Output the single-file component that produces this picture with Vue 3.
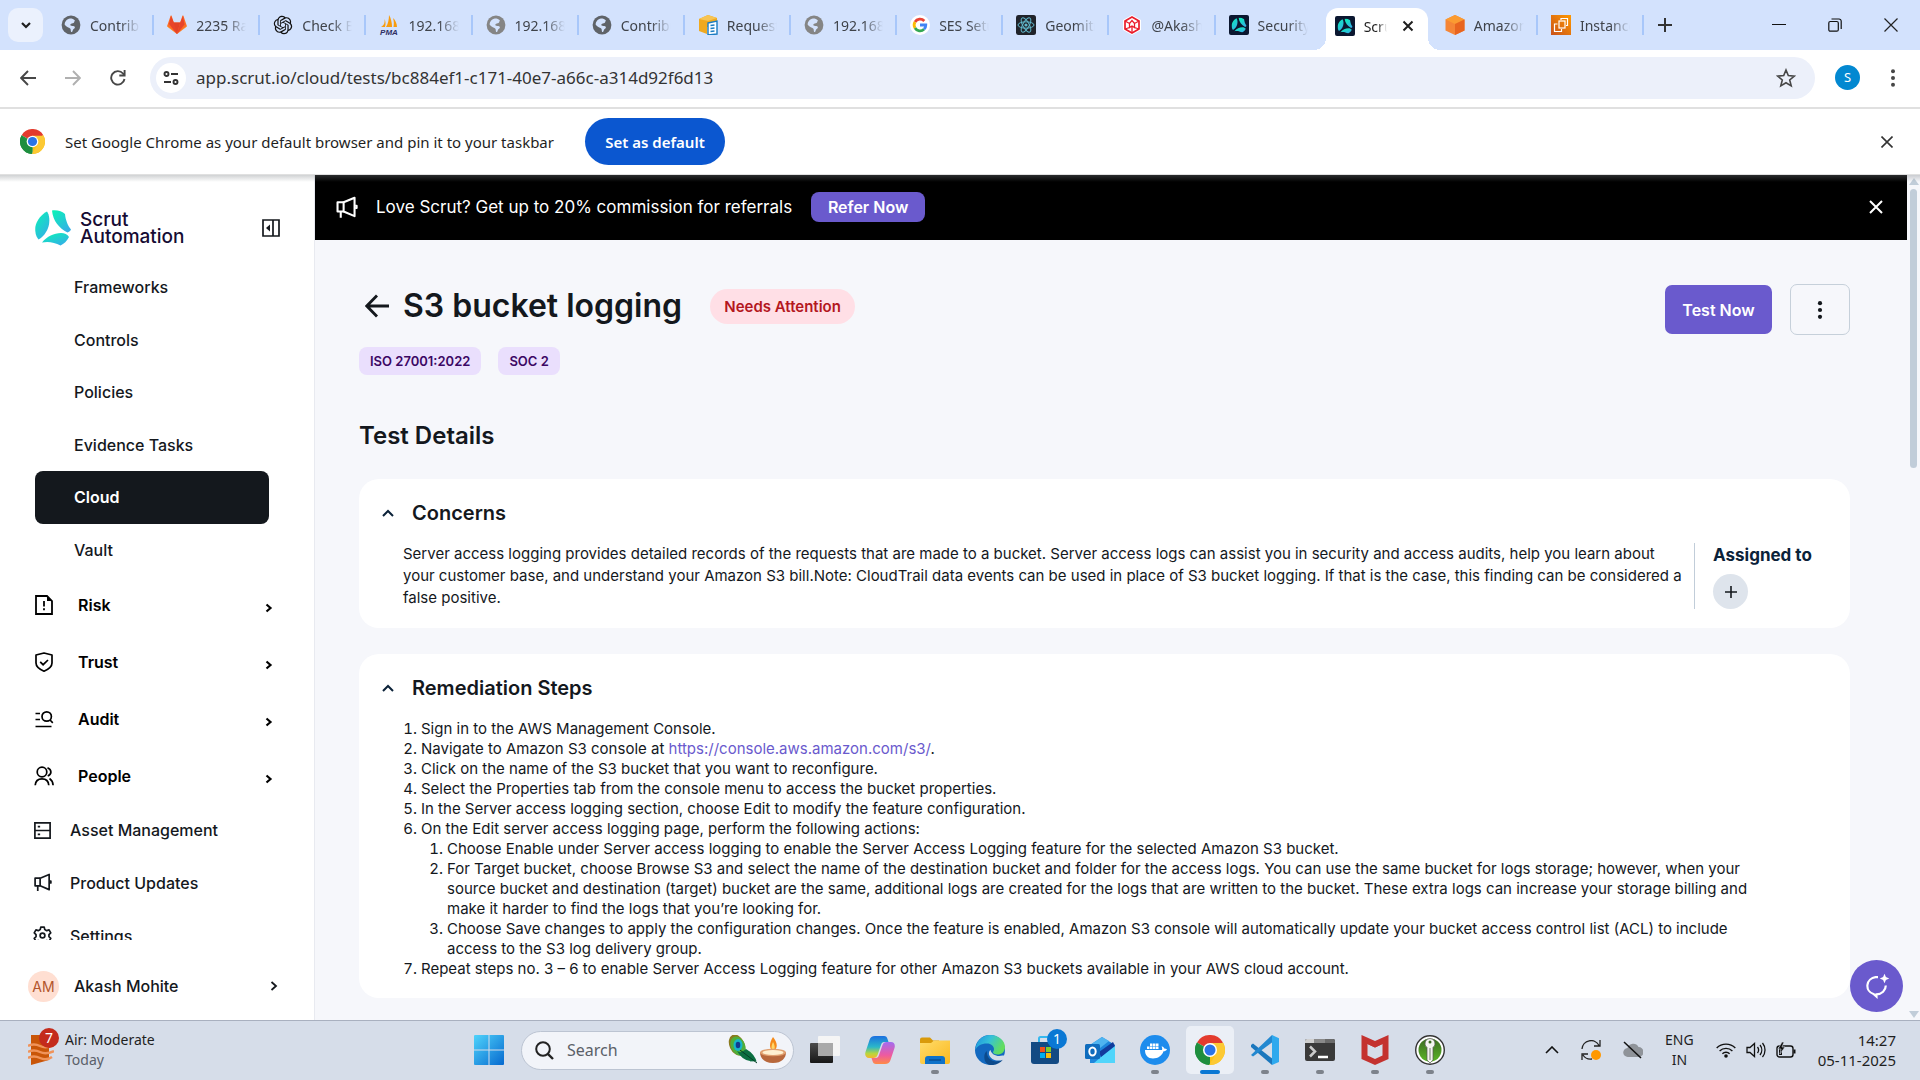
<script setup>
import { ref } from 'vue'

const tabs = [
  { icon: 'globe-dark', title: 'Contributions' },
  { icon: 'gitlab', title: '2235 Raise' },
  { icon: 'openai', title: 'Check Bucket' },
  { icon: 'pma', title: '192.168.1.20' },
  { icon: 'globe', title: '192.168.1.20' },
  { icon: 'globe-dark', title: 'Contributions' },
  { icon: 'request', title: 'Requests' },
  { icon: 'globe', title: '192.168.1.20' },
  { icon: 'google', title: 'SES Setup' },
  { icon: 'react', title: 'Geomitra' },
  { icon: 'redhex', title: '@Akash M' },
  { icon: 'scrut-tab', title: 'Security' },
  { icon: 'scrut-tab', title: 'Scrut', active: true },
  { icon: 'aws-cube', title: 'Amazon S3' },
  { icon: 'ec2', title: 'Instances' },
]

const subItems = ['Frameworks', 'Controls', 'Policies', 'Evidence Tasks', 'Cloud', 'Vault']
const groups = [
  { icon: 'risk', label: 'Risk' },
  { icon: 'trust', label: 'Trust' },
  { icon: 'audit', label: 'Audit' },
  { icon: 'people', label: 'People' },
]
const extras = [
  { icon: 'asset', label: 'Asset Management' },
  { icon: 'mega', label: 'Product Updates' },
  { icon: 'gear', label: 'Settings' },
]
const apps = [
  { icon: 'taskview', label: 'Task view' },
  { icon: 'copilot', label: 'Copilot' },
  { icon: 'explorer', label: 'File Explorer', running: true },
  { icon: 'edge', label: 'Edge' },
  { icon: 'store', label: 'Store', badge: '1' },
  { icon: 'outlook', label: 'Outlook' },
  { icon: 'docker', label: 'Docker', running: true },
  { icon: 'chrome', label: 'Chrome', running: true, active: true },
  { icon: 'vscode', label: 'Visual Studio Code', running: true },
  { icon: 'terminal', label: 'Terminal', running: true },
  { icon: 'mcafee', label: 'McAfee', running: true },
  { icon: 'keepass', label: 'KeePass', running: true },
]
const url = ref('app.scrut.io/cloud/tests/bc884ef1-c171-40e7-a66c-a314d92f6d13')
const query = ref('')
</script>

<template>
  <div class="screen">
    <svg class="sprite" aria-hidden="true">
      <defs>
        <linearGradient id="gScrut" x1="0" y1="0" x2="0.7" y2="1"><stop offset="0" stop-color="#08f5b5" /><stop offset="1" stop-color="#33b0e6" /></linearGradient>
        <linearGradient id="gWin" x1="0" y1="0" x2="1" y2="1"><stop offset="0" stop-color="#4fd3fb" /><stop offset="1" stop-color="#0669cf" /></linearGradient>
        <linearGradient id="gEdge" x1="0" y1="0" x2="1" y2="0.4"><stop offset="0" stop-color="#1b8fe0" /><stop offset="0.5" stop-color="#35c1d8" /><stop offset="1" stop-color="#63dd5e" /></linearGradient>
        <linearGradient id="gFolder" x1="0" y1="0" x2="1" y2="1"><stop offset="0" stop-color="#ffdc6b" /><stop offset="1" stop-color="#fbb91f" /></linearGradient>
        <linearGradient id="gCopA" x1="0" y1="0" x2="0" y2="1"><stop offset="0" stop-color="#1b6fe0" /><stop offset="0.5" stop-color="#2bb8c9" /><stop offset="0.8" stop-color="#b9d63c" /><stop offset="1" stop-color="#f7b52c" /></linearGradient>
        <linearGradient id="gCopB" x1="0" y1="0" x2="0" y2="1"><stop offset="0" stop-color="#a26cf0" /><stop offset="0.6" stop-color="#ee5aa0" /><stop offset="1" stop-color="#ff8b45" /></linearGradient>
        <linearGradient id="gDark" x1="0" y1="0" x2="0" y2="1"><stop offset="0" stop-color="#4b4b4b" /><stop offset="1" stop-color="#171717" /></linearGradient>
        <linearGradient id="gEc2" x1="0" y1="1" x2="1" y2="0"><stop offset="0" stop-color="#c8511b" /><stop offset="1" stop-color="#ff9900" /></linearGradient>
        <linearGradient id="gKey" x1="0" y1="0" x2="0" y2="1"><stop offset="0" stop-color="#3c6b22" /><stop offset="1" stop-color="#5bb528" /></linearGradient>
      </defs>
      <symbol id="globe-dark" viewBox="0 0 20 20"><circle cx="10" cy="10" r="9.4" fill="#5f6368" /><path d="M9 3.5c2 0 4 .6 5 2.200-1 .4-.4 1.800-1.500 2.300s-2.200.2-3 1.200.6 1.600 1.800 1.700 2.700.2 2.600 1.600-1.600 1.200-2 2.400-.4 2-1.700 2.200c-.6-1-.2-2.500-.8-3.400s-2-1-3-1.700-2-1.300-2.800-2.500c.1-3 2.400-5.600 5.400-6z" fill="#d3e2fd" /></symbol>
      <symbol id="globe" viewBox="0 0 20 20"><circle cx="10" cy="10" r="9.4" fill="#858585" /><path d="M9 3.500c2 0 4 .6 5 2.200-1 .4-.4 1.800-1.500 2.300s-2.200.2-3 1.200.6 1.600 1.800 1.700 2.700.2 2.600 1.600-1.600 1.200-2 2.400-.4 2-1.700 2.200c-.6-1-.2-2.500-.8-3.400s-2-1-3-1.700-2-1.300-2.800-2.500c.1-3 2.400-5.600 5.400-6z" fill="#d3e2fd" /></symbol>
      <symbol id="gitlab" viewBox="0 0 20 20"><path d="M10 19 .6 11.800a1 1 0 0 1-.4-1.100L3.600.8c.2-.5.800-.5 1 0L6.800 7.500h6.400L15.400.8c.2-.5.800-.5 1 0l3.400 9.900a1 1 0 0 1-.4 1.100z" fill="#fc6d26" /><path d="M6.800 7.500h6.400L10 19 3 9z" fill="#e24329" /><path d="M13.200 7.500 10 19l7.500-9.500L16 1z" fill="#e8452b" /><path d="M4 1 2 9l8 10-3.200-11.500z" fill="#e8452b" /><path d="m.2 10.700 9.800 8.300-9.400-7.200zM19.800 10.700 10 19l9.400-7.200z" fill="#fca326" /></symbol>
      <symbol id="openai" viewBox="-1 0 26 24"><path fill="#111" d="M22.2819 9.8211a5.9847 5.9847 0 0 0-.5157-4.9108 6.0462 6.0462 0 0 0-6.5098-2.9A6.0651 6.0651 0 0 0 4.9807 4.1818a5.9847 5.9847 0 0 0-3.9977 2.9 6.0462 6.0462 0 0 0 .7427 7.0966 5.98 5.98 0 0 0 .511 4.9107 6.051 6.051 0 0 0 6.5146 2.9001A5.9847 5.9847 0 0 0 13.2599 24a6.0557 6.0557 0 0 0 5.7718-4.2058 5.9894 5.9894 0 0 0 3.9977-2.9001 6.0557 6.0557 0 0 0-.7475-7.0729zm-9.022 12.6081a4.4755 4.4755 0 0 1-2.8764-1.0408l.1419-.0804 4.7783-2.7582a.7948.7948 0 0 0 .3927-.6813v-6.7369l2.02 1.1686a.071.071 0 0 1 .038.052v5.5826a4.504 4.504 0 0 1-4.4945 4.4944zm-9.6607-4.1254a4.4708 4.4708 0 0 1-.5346-3.0137l.142.0852 4.783 2.7582a.7712.7712 0 0 0 .7806 0l5.8428-3.3685v2.3324a.0804.0804 0 0 1-.0332.0615L9.74 19.9502a4.4992 4.4992 0 0 1-6.1408-1.6464zM2.3408 7.8956a4.485 4.485 0 0 1 2.3655-1.9728V11.6a.7664.7664 0 0 0 .3879.6765l5.8144 3.3543-2.0201 1.1685a.0757.0757 0 0 1-.071 0l-4.8303-2.7865A4.504 4.504 0 0 1 2.3408 7.872zm16.5963 3.8558L13.1038 8.364 15.1192 7.2a.0757.0757 0 0 1 .071 0l4.8303 2.7913a4.4944 4.4944 0 0 1-.6765 8.1042v-5.6772a.79.79 0 0 0-.407-.667zm2.0107-3.0231l-.142-.0852-4.7735-2.7818a.7759.7759 0 0 0-.7854 0L9.409 9.2297V6.8974a.0662.0662 0 0 1 .0284-.0615l4.8303-2.7866a4.4992 4.4992 0 0 1 6.6802 4.66zM8.3065 12.863l-2.02-1.1638a.0804.0804 0 0 1-.038-.0567V6.0742a4.4992 4.4992 0 0 1 7.3757-3.4537l-.142.0805L8.704 5.459a.7948.7948 0 0 0-.3927.6813zm1.0976-2.3654l2.602-1.4998 2.6069 1.4998v2.9994l-2.5974 1.4997-2.6067-1.4997Z" /></symbol>
      <symbol id="pma" viewBox="0 0 20 20"><path d="M10 0c2 3 3 8 3 12H7c2-3 3-8 3-12zM5.500 4c.4 3 0 6-3.500 8h4c1-3 .6-6-.5-8zM14 3c2.500 2 4 6 4 9h-3.500c.5-3 .5-6-.5-9z" fill="#f89c0e" /><text x="10" y="19.500" text-anchor="middle" font-size="8" font-weight="700" font-style="italic" font-family="Liberation Sans, sans-serif" fill="#2f2f63">PMA</text></symbol>
      <symbol id="request" viewBox="0 0 20 20"><path d="m1 4 9-4 9 3v9H9v7l-8-3z" fill="#f0a91f" /><path d="m1 4 9-4 9 3-9 3z" fill="#f7c453" /><path d="m10 8 9-2v13l-9 1z" fill="#fff" stroke="#1b7cc2" stroke-width="1.400" /><path d="m12.500 10.500 4-.5m-4 3.500 4-.5m-4 3.500 4-.5" stroke="#1b7cc2" stroke-width="1.400" /></symbol>
      <symbol id="google" viewBox="0 0 20 20"><circle cx="10" cy="10" r="10" fill="#fff" /><g fill="none" stroke-width="2.800"><path d="M14.300 6A5.800 5.800 0 0 0 5 7" stroke="#ea4335" /><path d="M5 7a5.800 5.800 0 0 0 0 6" stroke="#fbbc05" /><path d="M5 13a5.800 5.800 0 0 0 9 1.300" stroke="#34a853" /><path d="M14 14.300A5.800 5.800 0 0 0 15.800 10H10" stroke="#4285f4" /></g></symbol>
      <symbol id="react" viewBox="0 0 20 20"><rect width="20" height="20" rx="2.500" fill="#20232a" /><g fill="none" stroke="#61b8cc" stroke-width="1"><ellipse cx="10" cy="10" rx="8" ry="3.200" /><ellipse cx="10" cy="10" rx="8" ry="3.200" transform="rotate(60 10 10)" /><ellipse cx="10" cy="10" rx="8" ry="3.200" transform="rotate(120 10 10)" /></g><circle cx="10" cy="10" r="1.600" fill="#61b8cc" /></symbol>
      <symbol id="redhex" viewBox="0 0 20 20"><path d="m10 0 9 5v10l-9 5-9-5V5z" fill="#fff" /><g fill="none" stroke="#ea1d2c" stroke-width="1.700"><path d="m10 2 7 4v8l-7 4-7-4V6z" /><path d="M3 6l4.500 2.500 2.500-3 2.500 3L17 6M7.500 8.500v4L10 11l2.500 1.500v-4M3 14l4.500-1.500M17 14l-4.500-1.500M10 11v7" stroke-width="1.300" /></g></symbol>
      <symbol id="scrut" viewBox="0 0 36 36"><g fill="url(#gScrut)"><path d="M12 1.500C14.500 5 15 11 13.500 16.500 12 22 8 27 3.500 29.500.5 26 0 22 .3 17 1.500 10 7 4 12 1.500z" /><path d="M17 0.500c5-.8 10.500 1 13 3.500.5 6 3 12 6 15.500-1 2-2 2.500-3.500 3C24 18 18 11 17 .5z" /><path d="M7 32.500c5-6 12-9.500 19-9.500 3.500 0 6.500 1.500 8 4-2 4-5 7-8.500 8.500-6-3-12-4.500-18.500-3z" /></g></symbol>
      <symbol id="scrut-tab" viewBox="0 0 20 20"><rect width="20" height="20" rx="2" fill="#0b1730" /><g transform="translate(2.500 2.500) scale(.42)"><use href="#scrut" width="36" height="36" /></g></symbol>
      <symbol id="aws-cube" viewBox="0 0 20 20"><path d="m10 0 9.500 4.500v11L10 20 .5 15.500v-11z" fill="#f58536" /><path d="m10 0 9.500 4.500L10 9 .5 4.500z" fill="#fb9b31" /><path d="m10 9 9.500-4.500v11L10 20z" fill="#e8641f" /></symbol>
      <symbol id="ec2" viewBox="0 0 20 20"><rect width="20" height="20" fill="url(#gEc2)" /><g fill="none" stroke="#fff" stroke-width="1.200"><rect x="8" y="6" width="6" height="7" /><path d="M10 5V3.500h6.500v7H15M6.500 9H3.500v7.500h7V14" /></g></symbol>

      <symbol id="chrome" viewBox="0 0 30 30"><path d="M15 15 2 7.500A15 15 0 0 1 28 7.500z" fill="#e33b2e" /><path d="M15 15 28 7.500A15 15 0 0 1 15 30z" fill="#fbc116" /><path d="M15 15v15A15 15 0 0 1 2 7.500z" fill="#229342" /><path d="M15 8h13.200A15 15 0 0 1 15 30l6.100-11.500z" fill="#fcc934" /><path d="M2 7.500 8.900 18.500 15 22l-.5 8A15 15 0 0 1 2 7.500z" fill="#1e8e3e" /><path d="m21.100 18.500-6 11.500h-1z" fill="#fcc934" /><circle cx="15" cy="15" r="7" fill="#fff" /><circle cx="15" cy="15" r="5.500" fill="#2a74e8" /></symbol>

      <symbol id="mega" viewBox="0 0 20 20"><g fill="none" stroke="currentColor" stroke-width="1.800" stroke-linejoin="round"><path d="M7.500 5.500 17 1.500v16L7.500 13.500z" /><path d="M7.500 5.500H2.200v8h5.300M5 13.500V19M17.500 8.500h1.300v2h-1.300" /></g></symbol>
      <symbol id="risk" viewBox="0 0 20 20"><path d="M2 1h11l5 5v13H2z" fill="none" stroke="currentColor" stroke-width="1.800" /><path d="M13 1v5h5z" fill="currentColor" /><path d="M10 6v5.500M10 13.200v2" stroke="currentColor" stroke-width="1.800" /></symbol>
      <symbol id="trust" viewBox="0 0 20 20"><path d="M10 1 18 3v8c0 4-4 6.500-8 8.200C6 17.500 2 15 2 11V3z" fill="none" stroke="currentColor" stroke-width="1.700" stroke-linejoin="round" /><path d="m6.200 9.800 2.900 2.900L14 8" fill="none" stroke="currentColor" stroke-width="1.700" /></symbol>
      <symbol id="audit" viewBox="0 0 20 20"><g fill="none" stroke="currentColor" stroke-width="1.700"><path d="M1.500 4.500H6M1.500 10.500H6M1.500 17.500h16" /><circle cx="12.700" cy="7.500" r="4.700" /><path d="m16 11 2.800 2.800" /></g></symbol>
      <symbol id="people" viewBox="0 0 20 20"><g fill="none" stroke="currentColor" stroke-width="1.700"><circle cx="8" cy="6" r="4.800" /><path d="M1.200 19.200C1.500 15 4 12.800 8 12.800s6.500 2.200 6.800 6.400M13.500 1.800c4.500 2 4.500 6.500.2 8.200M15.500 12.500c2.200 1.500 3.400 3.500 3.600 6.700" /></g></symbol>
      <symbol id="asset" viewBox="0 0 20 20"><g fill="none" stroke="currentColor" stroke-width="1.800"><path d="M2 2h16v16H2zM2 10h16" /><path d="M5 6h2.500M5 14h2.500" /></g></symbol>
      <symbol id="gear" viewBox="0 0 20 20"><path d="M8.200 1.200h3.600l.6 2.600 2 1.100 2.500-.8 1.800 3.100-1.900 1.800v2.200l1.900 1.800-1.800 3.100-2.500-.8-2 1.100-.6 2.600H8.200l-.6-2.600-2-1.100-2.500.8L1.300 13l1.900-1.800V9L1.300 7.200l1.800-3.100 2.500.8 2-1.100z" fill="none" stroke="currentColor" stroke-width="1.800" stroke-linejoin="round" /><circle cx="10" cy="10" r="2.500" fill="none" stroke="currentColor" stroke-width="1.800" /></symbol>

      <symbol id="taskview" viewBox="0 0 30 30"><rect x="0" y="8" width="23" height="20" rx="1" fill="url(#gDark)" /><rect x="8" y="1" width="22" height="20" rx="1" fill="#f5f5f5" /><rect x="8" y="8" width="15" height="13" fill="#a9a9a9" /></symbol>
      <symbol id="copilot" viewBox="0 0 30 30"><path d="M10 1h9c2 0 3 1 3.500 3l1 3h-4c-2 0-3 1-3.500 3l-3.500 10c-.6 2-2 3-4 3H4c-3 0-4.500-2.500-3.500-6L4.500 5C5.300 2.500 7 1 10 1z" fill="url(#gCopA)" /><path d="M20 29h-9c-2 0-3-1-3.500-3l-1-3h4c2 0 3-1 3.500-3L17.500 10c.6-2 2-3 4-3H26c3 0 4.500 2.500 3.500 6l-4 12c-.8 2.500-2.500 4-5.500 4z" fill="url(#gCopB)" /></symbol>
      <symbol id="explorer" viewBox="0 0 30 30"><path d="M0 4.500A2 2 0 0 1 2 2.500h8l3 3h6v5H0z" fill="#d99a0b" /><path d="M0 8h11l3-2.500h16V27a2 2 0 0 1-2 2H2a2 2 0 0 1-2-2z" fill="url(#gFolder)" /><path d="M5 29v-5a3 3 0 0 1 3-3h14a3 3 0 0 1 3 3v5z" fill="#0f72c9" /><path d="M9 25h12" stroke="#0a4f93" stroke-width="1.500" /></symbol>
      <symbol id="edge" viewBox="0 0 30 30"><circle cx="15" cy="15" r="15" fill="#1369c0" /><path d="M.5 13C2 5 8 0 15 0c9 0 15 6 15 12 0 5-3.500 7.500-7.500 7.500-3 0-4.500-1-4.500-2.200 0-1 1-1.300 1-3.300C19 11 16 8.500 12 8.500 6 8.500 2 11 .5 15z" fill="url(#gEdge)" /><path d="M12 16c-1 6 4 10.500 9 10.500 3 0 5-.8 7-2-3 4-8 6-13 5.500C8 29 8 18 12 16z" fill="#0c4a8c" /><path d="M28 24.500c-4 2-12 1.500-14-5 0 0-.5-3 1.500-4.500 1 5 7 7 12 5.500 1-.3 2 0 2 .5 0 1-1 3-1.500 3.500z" fill="#d6dde9" /></symbol>
      <symbol id="store" viewBox="0 0 30 30"><path d="M9 8V3.500A1.500 1.500 0 0 1 10.500 2h9A1.500 1.500 0 0 1 21 3.500V8" fill="none" stroke="#35b8ef" stroke-width="2" /><path d="M1 7h28v19a3 3 0 0 1-3 3H4a3 3 0 0 1-3-3z" fill="#134a83" /><path d="M10 12h5v5h-5z" fill="#f1511b" /><path d="M16 12h5v5h-5z" fill="#80cc28" /><path d="M10 18h5v5h-5z" fill="#00adef" /><path d="M16 18h5v5h-5z" fill="#fbbc09" /></symbol>
      <symbol id="outlook" viewBox="0 0 30 30"><path d="M5 10 17 2l13 8v18H5z" fill="#1e86dc" /><path d="m5 10 12-8 7 4-14 11z" fill="#4fb4f0" /><path d="M30 10v18H9z" fill="#51d5fb" /><path d="M14 17 28 7l2 4-14 11z" fill="#123b9c" /><rect x="0" y="9" width="15" height="15" rx="1.500" fill="#0f6cbd" /><ellipse cx="7.500" cy="16.500" rx="3.200" ry="3.900" fill="none" stroke="#fff" stroke-width="2" /></symbol>
      <symbol id="docker" viewBox="0 0 30 30"><circle cx="15" cy="15" r="15" fill="#1d8ced" /><path d="M5 15h17c.5-1.500 0-2.500-.5-3.500 1.500-.5 2.500 1 2.800 2 1 0 2 .2 2.700.8-.7 1.500-2 2-3.500 2C22 21 18 23.500 13 23.500c-5 0-8-3-8-8.500z" fill="#fff" /><path d="M7 11.500h2.500V14H7zm3 0h2.500V14H10zm3 0h2.500V14H13zm3 0h2.500V14H16zm-3-3h2.500V11H13zm-3 0h2.500V11H10zm6 0h2.500V11H16z" fill="#fff" /></symbol>
      <symbol id="vscode" viewBox="0 0 30 30"><path d="m1 10 2-1.500L24 25l-2 5L1 12z" fill="#1b77bd" /><path d="M1 20 22 0l2 6L3 21.500z" fill="#2388d0" /><path d="m22 0 7 3.200V27l-7 3z" fill="#2fa9ee" /></symbol>
      <symbol id="terminal" viewBox="0 0 30 30"><path d="M0 6a2 2 0 0 1 2-2h26a2 2 0 0 1 2 2v18a2 2 0 0 1-2 2H2a2 2 0 0 1-2-2z" fill="#3a3a3a" /><path d="M0 8V6a2 2 0 0 1 2-2h7v4z" fill="#d0d0d0" /><path d="M9 4h11v4H9z" fill="#8a8a8a" /><path d="M20 4h8a2 2 0 0 1 2 2v2H20z" fill="#6b6b6b" /><path d="m5 11.500 5 5-5 5" fill="none" stroke="#ccc" stroke-width="2.500" /><path d="M13 22h10" stroke="#fff" stroke-width="2.500" /></symbol>
      <symbol id="mcafee" viewBox="0 0 30 30"><path d="M1.500 0 15 6 28.500 0v24L15 30 1.500 24z" fill="#c4322f" /><path d="M7.500 9 15 12.500 22.500 9v11.500L15 24l-7.500-3.500z" fill="#d6dde9" /><path d="M7.500 9 15 12.500 22.500 9V5L15 8.500 7.500 5z" fill="#c4322f" /></symbol>
      <symbol id="keepass" viewBox="0 0 30 30"><circle cx="15" cy="15" r="14.300" fill="#fff" stroke="#333" stroke-width="1.400" /><circle cx="15" cy="15" r="11.500" fill="url(#gKey)" /><path d="M15 3.500a5 5 0 0 1 3 9V25l-3 3-3-3V12.500a5 5 0 0 1 3-9z" fill="#f3f5ef" stroke="#555" stroke-width=".7" /><circle cx="15" cy="7" r="1.500" fill="#3c6b22" /><path d="M15 13v12" stroke="#777" stroke-width="1" /></symbol>
    </svg>

    <header class="chrome">
      <div class="tabstrip">
        <button class="tab-search" aria-label="Search tabs"><svg width="12" height="12" viewBox="0 0 12 12"><path d="m2 4 4 4 4-4" fill="none" stroke="#1f1f1f" stroke-width="2.200" /></svg></button>
        <div class="tabs">
          <div v-for="(t, i) in tabs" :key="i" class="tab" :class="{ active: t.active, plain: tabs[i + 1]?.active || t.active }">
            <svg class="fav" width="20" height="20"><use :href="'#' + t.icon" /></svg>
            <span class="tab-title">{{ t.title }}</span>
            <button v-if="t.active" class="tab-close" aria-label="Close tab"><svg width="12" height="12" viewBox="0 0 12 12"><path d="m1.500 1.500 9 9m0-9-9 9" stroke="#1f1f1f" stroke-width="2" /></svg></button>
          </div>
        </div>
        <button class="bare" aria-label="New tab"><svg width="14" height="14" viewBox="0 0 14 14"><path d="M7 0v14M0 7h14" stroke="#333" stroke-width="2" /></svg></button>
        <div class="winctl">
          <button class="bare" aria-label="Minimize"><svg width="14" height="14" viewBox="0 0 14 14"><path d="M0 6.500h14" stroke="#111" /></svg></button>
          <button class="bare" aria-label="Restore"><svg width="14" height="14" viewBox="0 0 14 14"><g fill="none" stroke="#111" stroke-width="1.200"><rect x=".8" y="3.500" width="9.500" height="9.700" rx="1.500" /><path d="M3.500 1h7.500a2.200 2.200 0 0 1 2.200 2.200V11" /></g></svg></button>
          <button class="bare" aria-label="Close window"><svg width="14" height="14" viewBox="0 0 14 14"><path d="m.5.5 13 13m0-13-13 13" stroke="#222" stroke-width="1.200" /></svg></button>
        </div>
      </div>

      <div class="toolbar">
        <div class="navbtns">
          <button class="bare" aria-label="Back"><svg width="16" height="16" viewBox="0 0 16 16"><path d="M16 8H1.500M8 1 1.200 8 8 15" fill="none" stroke="#474747" stroke-width="1.900" /></svg></button>
          <button class="bare" aria-label="Forward"><svg width="16" height="16" viewBox="0 0 16 16"><path d="M0 8h14.500M8 1l6.800 7L8 15" fill="none" stroke="#b0b0b0" stroke-width="1.900" /></svg></button>
          <button class="bare" aria-label="Reload"><svg width="16" height="16" viewBox="0 0 16 16"><path d="M14.500 9A6.700 6.700 0 1 1 13 3.500L14.500 5" fill="none" stroke="#474747" stroke-width="1.900" /><path d="M14.600 0v5.500H9.300" fill="none" stroke="#474747" stroke-width="1.900" /></svg></button>
        </div>
        <div class="omnibox">
          <span class="site"><svg width="16" height="16" viewBox="0 0 16 16"><g fill="none" stroke="#333" stroke-width="1.900"><circle cx="3.500" cy="4" r="2" /><path d="M8 4h7M1 12h7" /><circle cx="12.500" cy="12" r="2" /></g></svg></span>
          <input v-model="url" class="url" type="text" aria-label="Address" spellcheck="false" />
          <button class="bare" aria-label="Bookmark"><svg width="20" height="20" viewBox="0 0 20 20"><path d="m10 2 2.300 5.600 6 .5-4.600 3.900 1.500 5.900-5.200-3.200-5.200 3.200 1.500-5.900-4.600-3.900 6-.5z" fill="none" stroke="#474747" stroke-width="1.600" /></svg></button>
        </div>
        <button class="profile">S</button>
        <button class="bare" aria-label="Menu"><svg width="6" height="18" viewBox="0 0 6 18"><g fill="#474747"><circle cx="3" cy="2.200" r="2" /><circle cx="3" cy="9" r="2" /><circle cx="3" cy="15.800" r="2" /></g></svg></button>
      </div>

      <div class="infobar">
        <svg width="25" height="25"><use href="#chrome" /></svg>
        <span class="info-text">Set Google Chrome as your default browser and pin it to your taskbar</span>
        <button class="info-btn">Set as default</button>
        <button class="bare info-close" aria-label="Dismiss"><svg width="12" height="12" viewBox="0 0 12 12"><path d="m.5.5 11 11m0-11-11 11" stroke="#333" stroke-width="1.600" /></svg></button>
      </div>
    </header>

    <div class="app">
      <aside class="sidebar">
        <div class="brand">
          <svg width="36" height="36"><use href="#scrut" /></svg>
          <span class="brand-name">Scrut<br />Automation</span>
          <button class="bare" aria-label="Collapse sidebar"><svg width="18" height="18" viewBox="0 0 18 18"><path d="M1 1h16v16H1zM11 1v16" fill="none" stroke="#14181d" stroke-width="1.700" /><path d="M8 5.500v7L4 9z" fill="#14181d" /></svg></button>
        </div>
        <nav class="nav">
          <ul class="subnav">
            <li v-for="s in subItems" :key="s"><a href="#" :class="{ current: s === 'Cloud' }">{{ s }}</a></li>
          </ul>
          <ul class="groups">
            <li v-for="g in groups" :key="g.label">
              <a href="#"><svg width="20" height="20"><use :href="'#' + g.icon" /></svg><span>{{ g.label }}</span>
                <svg class="chev" width="8" height="10" viewBox="0 0 8 10"><path d="m1.500 1.500 4 3.500-4 3.500" fill="none" stroke="#000" stroke-width="2.200" /></svg></a>
            </li>
          </ul>
          <ul class="extras">
            <li v-for="e in extras" :key="e.label"><a href="#"><svg width="19" height="19"><use :href="'#' + e.icon" /></svg><span>{{ e.label }}</span></a></li>
          </ul>
        </nav>
        <button class="user">
          <span class="avatar">AM</span><span class="user-name">Akash Mohite</span>
          <svg width="8" height="10" viewBox="0 0 8 10"><path d="m1.500 1 4.500 4-4.500 4" fill="none" stroke="#14181d" stroke-width="1.800" /></svg>
        </button>
      </aside>

      <main class="main">
        <div class="banner">
          <svg width="23" height="23"><use href="#mega" /></svg>
          <span class="banner-text">Love Scrut? Get up to 20% commission for referrals</span>
          <button class="refer">Refer Now</button>
          <button class="bare banner-close" aria-label="Close banner"><svg width="14" height="14" viewBox="0 0 14 14"><path d="m1 1 12 12m0-12L1 13" stroke="#fff" stroke-width="2" /></svg></button>
        </div>
        <div class="content">
          <div class="head">
            <div class="head-left">
              <button class="bare" aria-label="Go back"><svg width="24" height="24" viewBox="0 0 24 24"><path d="M24 12H2M12 1.500 1.800 12 12 22.500" fill="none" stroke="#14181d" stroke-width="2.800" /></svg></button>
              <h1>S3 bucket logging</h1>
              <span class="status">Needs Attention</span>
            </div>
            <div class="actions">
              <button class="test-now">Test Now</button>
              <button class="kebab" aria-label="More actions"><svg width="6" height="18" viewBox="0 0 6 18"><g fill="#14181d"><circle cx="3" cy="2.200" r="2.100" /><circle cx="3" cy="9" r="2.100" /><circle cx="3" cy="15.800" r="2.100" /></g></svg></button>
            </div>
          </div>
          <div class="tags"><span>ISO 27001:2022</span><span>SOC 2</span></div>
          <h2>Test Details</h2>

          <section class="card">
            <h3><svg width="12" height="8" viewBox="0 0 12 8"><path d="m1 7 5-5 5 5" fill="none" stroke="#0b2239" stroke-width="2" /></svg>Concerns</h3>
            <div class="concern">
              <p>Server access logging provides detailed records of the requests that are made to a bucket. Server access logs can assist you in security and access audits, help you learn about your customer base, and understand your Amazon S3 bill.Note: CloudTrail data events can be used in place of S3 bucket logging. If that is the case, this finding can be considered a false positive.</p>
              <div class="assigned">
                <strong>Assigned to</strong>
                <button aria-label="Assign"><svg width="14" height="14" viewBox="0 0 14 14"><path d="M7 1v12M1 7h12" stroke="#14181d" stroke-width="1.600" /></svg></button>
              </div>
            </div>
          </section>

          <section class="card">
            <h3><svg width="12" height="8" viewBox="0 0 12 8"><path d="m1 7 5-5 5 5" fill="none" stroke="#0b2239" stroke-width="2" /></svg>Remediation Steps</h3>
            <ol class="steps">
              <li>Sign in to the AWS Management Console.</li>
              <li>Navigate to Amazon S3 console at <a href="#">https://console.aws.amazon.com/s3/</a>.</li>
              <li>Click on the name of the S3 bucket that you want to reconfigure.</li>
              <li>Select the Properties tab from the console menu to access the bucket properties.</li>
              <li>In the Server access logging section, choose Edit to modify the feature configuration.</li>
              <li>On the Edit server access logging page, perform the following actions:
                <ol>
                  <li>Choose Enable under Server access logging to enable the Server Access Logging feature for the selected Amazon S3 bucket.</li>
                  <li>For Target bucket, choose Browse S3 and select the name of the destination bucket and folder for the access logs. You can use the same bucket for logs storage; however, when your source bucket and destination (target) bucket are the same, additional logs are created for the logs that are written to the bucket. These extra logs can increase your storage billing and make it harder to find the logs that you’re looking for.</li>
                  <li>Choose Save changes to apply the configuration changes. Once the feature is enabled, Amazon S3 console will automatically update your bucket access control list (ACL) to include access to the S3 log delivery group.</li>
                </ol>
              </li>
              <li>Repeat steps no. 3 – 6 to enable Server Access Logging feature for other Amazon S3 buckets available in your AWS cloud account.</li>
            </ol>
          </section>
        </div>
      </main>

      <div class="scrollbar">
        <svg width="10" height="7" viewBox="0 0 10 7"><path d="M5 0 10 7H0z" fill="#c1cdd9" /></svg>
        <div class="track"><div class="thumb"></div></div>
        <svg width="10" height="7" viewBox="0 0 10 7"><path d="M0 0h10L5 7z" fill="#c1cdd9" /></svg>
      </div>
      <div class="top-shade"></div>
      <button class="fab" aria-label="Assistant"><svg width="26" height="26" viewBox="0 0 26 26"><path d="M14 4.200h-2.500A9.300 8.700 0 0 0 9.500 21l3 2.600V21.300A9.300 8.700 0 0 0 21.800 12.500" fill="none" stroke="#fff" stroke-width="2.200" /><path d="m20.500 .8 1.400 3.300L25.200 5.500l-3.300 1.400-1.400 3.300-1.400-3.300-3.300-1.400 3.300-1.400z" fill="#fff" /></svg></button>
    </div>

    <footer class="taskbar">
      <button class="weather">
        <span class="wx-icon">
          <svg width="26" height="30" viewBox="0 0 26 30"><path d="M3 0h18v25L3 30z" fill="#c95508" /><path d="M0 11q6-3 12 0t14-1M0 17q6-3 12 0t14-1M0 23q6-3 12 0t12-1" fill="none" stroke="#f0935a" stroke-width="2.500" /></svg>
          <span class="wx-badge">7</span>
        </span>
        <span class="wx-text"><span>Air: Moderate</span><span class="dim">Today</span></span>
      </button>

      <div class="center">
        <button class="bare start" aria-label="Start"><svg width="30" height="30" viewBox="0 0 30 30"><path d="M0 1a1 1 0 0 1 1-1h13.500v14.500H0zM15.500 0H29a1 1 0 0 1 1 1v13.500H15.500zM0 15.500h14.500V30H1a1 1 0 0 1-1-1zM15.500 15.500H30V29a1 1 0 0 1-1 1H15.500z" fill="url(#gWin)" /></svg></button>
        <label class="search">
          <svg width="19" height="19" viewBox="0 0 19 19"><circle cx="8" cy="8" r="6.800" fill="none" stroke="#222" stroke-width="2" /><path d="m12.800 12.800 5.200 5.200" stroke="#222" stroke-width="2.400" /></svg>
          <input v-model="query" type="text" placeholder="Search" aria-label="Search" />
          <svg width="60" height="30" viewBox="0 0 60 30"><ellipse cx="9" cy="10" rx="7.500" ry="11" transform="rotate(-25 9 10)" fill="#8a7a1e" /><ellipse cx="10" cy="11" rx="7" ry="10" transform="rotate(-25 10 11)" fill="#4fae3a" /><path d="M9 16q4 3 9-2 9 5 11 14l-1-2q-1 1-2 0-1 1-2 0-1 1-2 0-8-1-13-10z" fill="#0b6f42" /><ellipse cx="10" cy="10" rx="4.500" ry="6" fill="#16b6c8" /><ellipse cx="10" cy="10" rx="2.300" ry="3.200" fill="#123a8f" /><path d="m12 15 17 13" stroke="#063f26" /><path d="M45 2c5 6 5 12 0 14-4-2-4-8 0-14z" fill="#f58a1a" /><path d="M45 7c2.500 4 2 8 0 9-2-1-2-5 0-9z" fill="#ffd76a" /><path d="M32 17h26c0 6-4 11-13 11s-13-5-13-11z" fill="#b8683c" /><ellipse cx="45" cy="17.500" rx="13" ry="3.800" fill="#e0a070" /><ellipse cx="45" cy="17.500" rx="10.500" ry="2.600" fill="#fff0d0" /></svg>
        </label>
        <button v-for="a in apps" :key="a.icon" class="appbtn" :class="{ running: a.running, active: a.active }" :aria-label="a.label">
          <svg width="30" height="30"><use :href="'#' + a.icon" /></svg>
          <span v-if="a.badge" class="app-badge">{{ a.badge }}</span>
        </button>
      </div>

      <div class="tray">
        <svg width="14" height="8" viewBox="0 0 14 8"><path d="m1 7 6-6 6 6" fill="none" stroke="#111" stroke-width="1.600" /></svg>
        <svg width="20" height="20" viewBox="0 0 20 20"><g fill="none" stroke="#222" stroke-width="1.300"><path d="M1 9A9 9 0 0 1 18 5.500M19 0v6h-6M1 20v-6h6M2 15a9 9 0 0 0 9 4" /></g><circle cx="15" cy="15" r="5" fill="#ff9800" /></svg>
        <svg width="20" height="18" viewBox="0 0 20 18"><path d="M5 16a4.500 4.500 0 0 1-.5-9 6 6 0 0 1 11-1A5 5 0 0 1 15.500 16z" fill="#8f9399" /><path d="m1 1 17 16" stroke="#111" stroke-width="1.500" /></svg>
        <span class="lang">ENG<br />IN</span>
        <div class="status-icons">
          <svg width="20" height="16" viewBox="0 0 20 16"><g fill="none" stroke="#111" stroke-width="1.400"><path d="M.7 6a13 13 0 0 1 18.600 0M3.600 9a9 9 0 0 1 12.800 0M6.400 11.800a5 5 0 0 1 7.200 0" /></g><circle cx="10" cy="14" r="1.800" fill="#111" /></svg>
          <svg width="20" height="16" viewBox="0 0 20 16"><g fill="none" stroke="#111" stroke-width="1.300"><path d="M1 5.500h3L8.500 1.500v13L4 10.500H1zM11.500 5a5 5 0 0 1 0 6M14 3a8 8 0 0 1 0 10M16.500 1a11 11 0 0 1 0 14" /></g></svg>
          <svg width="20" height="16" viewBox="0 0 20 16"><rect x="1" y="4" width="16" height="11" rx="2.500" fill="none" stroke="#111" stroke-width="1.400" /><path d="M18.500 7.500v4" stroke="#111" stroke-width="2" /><path d="M3 6h3v7H3z" fill="#111" /><path d="M6 0 2 7h3l-1 5 5-7H6l2-5z" fill="#111" stroke="#d6dde9" stroke-width=".6" /></svg>
        </div>
        <span class="clock">14:27<br />05-11-2025</span>
      </div>
    </footer>
  </div>
</template>

<style>
body { margin: 0; }
</style>

<style scoped>
* { box-sizing: border-box; }
.screen { display: flex; flex-direction: column; height: 100vh; overflow: hidden; font-family: "Noto Sans", "Open Sans", sans-serif; font-size: 14px; color: #1f1f1f; }
.sprite { position: absolute; width: 0; height: 0; }
svg { display: block; flex: none; }
button { font: inherit; color: inherit; border: 0; padding: 0; background: none; }
a { color: inherit; text-decoration: none; }
ul { list-style: none; margin: 0; padding: 0; }
.bare { display: flex; align-items: center; justify-content: center; flex: none; }

.tabstrip { display: flex; align-items: center; height: 50px; background: #d3e2fd; padding: 0 22px 0 8px; }
.tab-search { display: flex; align-items: center; justify-content: center; width: 35px; height: 34px; border-radius: 10px; background: #ebf1fd; flex: none; }
.tabs { display: flex; align-self: stretch; flex: 0 1 1596px; min-width: 0; margin: 0 14px 0 5px; }
.tab { flex: 1 1 0; min-width: 0; display: flex; align-items: center; gap: 9px; padding: 0 14px 0 13px; position: relative; color: #3f434a; }
.tab::after { content: ""; position: absolute; right: 0; top: 15px; width: 2px; height: 20px; background: #a8c7fa; }
.tab.plain::after { display: none; }
.tab-title { flex: 1; min-width: 0; overflow: hidden; white-space: nowrap; mask-image: linear-gradient(90deg, #000 60%, transparent); }
.tab.active { align-self: flex-end; height: 42px; margin: 0 4px; background: #fff; border-radius: 12px 12px 0 0; padding: 0 14px 6px 9px; color: #1f1f1f; }
.tab.active::before { content: ""; position: absolute; left: -12px; right: -12px; bottom: 0; height: 12px; background: radial-gradient(circle at 0 0, transparent 12px, #fff 12px) left / 12px 12px no-repeat, radial-gradient(circle at 100% 0, transparent 12px, #fff 12px) right / 12px 12px no-repeat; }
.tab-close { margin-left: 6px; }
.winctl { margin-left: auto; display: flex; gap: 42px; }

.toolbar { display: flex; align-items: center; height: 59px; padding: 0 24px 2px 20px; background: #fff; border-bottom: 2px solid #e0e0e0; }
.navbtns { display: flex; gap: 29px; margin-right: 24px; }
.omnibox { flex: 1; min-width: 0; display: flex; align-items: center; height: 42px; border-radius: 21px; background: #ecf0fa; padding: 0 19px 0 6px; }
.site { width: 30px; height: 30px; border-radius: 50%; background: #fff; display: flex; align-items: center; justify-content: center; }
.url { flex: 1; min-width: 0; border: 0; background: none; font: inherit; font-size: 17px; color: #333; padding: 0 0 0 10px; outline: none; }
.profile { width: 25px; height: 25px; border-radius: 50%; background: #0288d1; color: #fff; font-size: 13px; line-height: 25px; margin: 0 30px 0 20px; }
.infobar { display: flex; align-items: center; height: 66px; padding: 0 27px 0 20px; background: #fff; border-bottom: 1px solid #e0e0e0; }
.info-text { min-width: 500px; margin: 0 20px; font-size: 15px; white-space: nowrap; }
.info-btn { width: 140px; height: 47px; border-radius: 24px; background: #0b57d0; color: #fff; font-size: 15px; font-weight: 600; white-space: nowrap; }
.info-close { margin-left: auto; }

.app { flex: 1; min-height: 0; display: flex; position: relative; background: #f6f7fb; font-family: Inter, "Open Sans", sans-serif; font-size: 16px; color: #14181d; }
.top-shade { position: absolute; left: 0; right: 0; top: 0; height: 7px; background: linear-gradient(rgba(120, 125, 130, .35), rgba(120, 125, 130, 0)); }
.sidebar { width: 315px; flex: none; display: flex; flex-direction: column; background: #fff; border-right: 1px solid #e8eaf0; }
.brand { display: flex; align-items: center; gap: 9px; height: 86px; padding: 19px 34px 0 35px; }
.brand-name { flex: 1; font-size: 19px; line-height: 17px; font-weight: 500; color: #160b33; }
.nav { flex: 1; min-height: 0; overflow: hidden; font-weight: 500; }
.nav a { display: flex; align-items: center; height: 100%; }
.subnav { display: grid; grid-auto-rows: 1fr; height: 315px; padding: 0 45px 0 35px; }
.subnav a { padding-left: 39px; border-radius: 8px; }
.subnav a.current { background: #14181d; color: #fff; font-weight: 600; }
.groups { color: #000; font-weight: 600; }
.groups li { height: 57px; padding: 0 41px 0 34px; }
.groups a span { flex: 1; margin-left: 24px; }
.groups .chev { margin-top: 6px; }
.extras { display: grid; grid-auto-rows: 1fr; height: 158px; padding-left: 33px; }
.extras span { margin-left: 18px; }
.user { display: flex; align-items: center; height: 80px; padding: 12px 36px 0 28px; text-align: left; font-weight: 500; }
.avatar { width: 31px; height: 31px; border-radius: 50%; background: #ffdfd2; color: #b2552c; font-size: 14px; font-weight: 400; line-height: 31px; text-align: center; }
.user-name { flex: 1; margin-left: 15px; }

.main { flex: 1; min-width: 0; overflow: hidden; }
.banner { display: flex; align-items: center; height: 65px; padding: 0 24px 1px 20px; background: #000; color: #fff; }
.banner-text { margin: 0 19px 0 18px; font-size: 17px; white-space: nowrap; }
.refer { width: 114px; height: 30px; border-radius: 8px; background: #6a5acd; font-weight: 600; white-space: nowrap; }
.banner-close { margin-left: auto; }
.content { padding: 44px 57px 22px 44px; }
.head { display: flex; justify-content: space-between; align-items: flex-start; }
.head-left { display: flex; align-items: center; height: 44px; padding-left: 6px; }
h1 { margin: 0 28px 0 14px; font-size: 32px; line-height: 44px; font-weight: 600; white-space: nowrap; }
.status { width: 145px; height: 35px; border-radius: 18px; background: #ffdfe6; color: #b4171e; font-size: 15px; font-weight: 600; line-height: 35px; text-align: center; white-space: nowrap; }
.actions { display: flex; align-items: center; gap: 18px; }
.test-now { width: 107px; height: 49px; border-radius: 7px; background: #6a5acd; color: #fff; font-weight: 600; white-space: nowrap; }
.kebab { display: flex; align-items: center; justify-content: center; width: 60px; height: 51px; border: 1px solid #c6d0da; border-radius: 7px; }
.tags { display: flex; gap: 17px; margin-top: 12px; }
.tags span { height: 28px; padding: 0 11px; border-radius: 8px; background: #eadffd; color: #3c0764; font-size: 13px; line-height: 28px; font-weight: 600; }
h2 { margin: 45px 0 27px; font-size: 24px; line-height: 32px; font-weight: 600; }
.card { background: #fff; border-radius: 20px; padding: 22px 0 19px; margin-bottom: 26px; }
h3 { display: flex; align-items: center; gap: 18px; margin: 0; padding-left: 23px; font-size: 20px; line-height: 24px; font-weight: 600; }
.concern { display: flex; margin-top: 18px; padding-left: 44px; }
.concern p { flex: 1; margin: 0 8px 0 0; font-size: 15px; line-height: 22px; }
.assigned { display: flex; flex-direction: column; width: 156px; padding-left: 18px; border-left: 1px solid #c1cdd9; }
.assigned strong { font-size: 17px; line-height: 24px; font-weight: 700; color: #0b2239; }
.assigned button { display: flex; align-items: center; justify-content: center; width: 35px; height: 35px; margin-top: 7px; border-radius: 50%; background: #dee4ec; }
.steps { margin: 19px 0 0; padding: 0 98px 0 62px; font-size: 15px; line-height: 20px; }
.steps ol { margin: 0; padding-left: 26px; }
.steps a { color: #6a5acd; }

.scrollbar { width: 13px; flex: none; display: flex; flex-direction: column; align-items: center; padding: 3px 0 2px; }
.track { flex: 1; width: 7px; padding-top: 4px; }
.thumb { height: 34%; border-radius: 4px; background: #c1cdd9; }
.fab { position: absolute; right: 17px; bottom: 8px; width: 53px; height: 52px; border-radius: 50%; background: #6a5acd; display: flex; align-items: center; justify-content: center; }

.taskbar { display: flex; align-items: center; justify-content: space-between; height: 60px; flex: none; background: #d6dde9; border-top: 1px solid #a9b0bf; padding-bottom: 2px; position: relative; }
.weather { display: flex; align-items: center; gap: 11px; padding-left: 28px; text-align: left; line-height: 20px; }
.wx-icon { position: relative; }
.wx-badge { position: absolute; left: 11px; top: -7px; width: 20px; height: 20px; border-radius: 50%; background: #c42b1c; color: #fff; line-height: 20px; text-align: center; }
.wx-text { display: flex; flex-direction: column; }
.dim { color: #5a5f69; }
.center { position: absolute; left: 50%; top: 0; height: 58px; margin-left: -486px; display: flex; align-items: center; }
.start { margin-right: 17px; }
.search { display: flex; align-items: center; width: 273px; height: 39px; border-radius: 20px; background: #f2f4f9; border: 1px solid #bcc4d2; padding: 0 5px 0 13px; }
.search input { flex: 1; min-width: 0; border: 0; background: none; font: inherit; font-size: 16px; padding: 0 0 0 13px; outline: none; }
.search input::placeholder { color: #5b6068; opacity: 1; }
.appbtn { position: relative; display: flex; align-items: center; justify-content: center; width: 48px; height: 48px; margin-left: 7px; border-radius: 5px; }
.appbtn.active { background: #ebeff6; }
.appbtn.running::after { content: ""; position: absolute; bottom: 0; left: 20px; width: 8px; height: 4px; border-radius: 2px; background: #7d828b; }
.appbtn.active::after { left: 14px; width: 20px; background: #0a78d4; }
.app-badge { position: absolute; right: 2px; top: 3px; width: 20px; height: 20px; border-radius: 50%; background: #0a78d4; color: #fff; line-height: 20px; text-align: center; }
.tray { display: flex; align-items: center; padding-right: 24px; line-height: 20px; gap: 22px; white-space: nowrap; }
.lang { text-align: center; }
.status-icons { display: flex; gap: 10px; }
.clock { font-size: 15px; text-align: right; }
</style>
